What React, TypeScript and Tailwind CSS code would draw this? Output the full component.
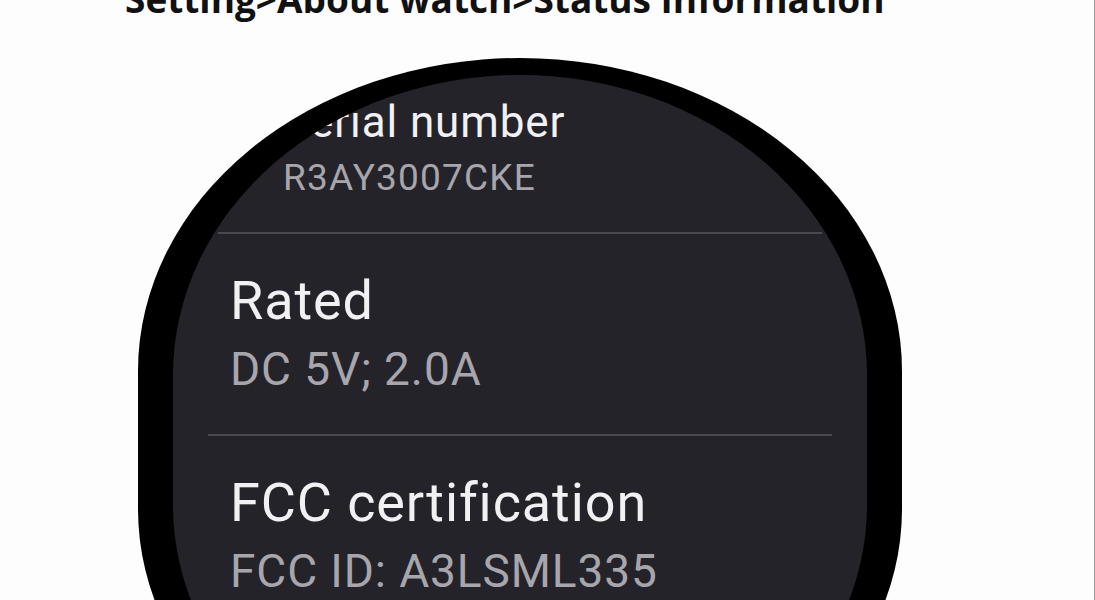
export default function App() {
  return (
    <div className="w-[1095px] h-[600px] overflow-hidden bg-[#fdfdfd] border-r border-[#9c9c9c]">
      <h1
        className="-mt-[20px] ml-[125px] text-[37px] leading-none font-bold text-[#111] whitespace-nowrap"
        style={{ fontFamily: '"Open Sans", "Noto Sans", sans-serif' }}
      >
        Setting&gt;About watch&gt;Status Information
      </h1>

      {/* watch face */}
      <div className="mt-[41px] ml-[138px] w-[764px] h-[764px] rounded-[382px/313px] bg-black pt-[17px] pl-[35px]">
        <div
          className="w-[694px] h-[730px] rounded-[347px/300px] bg-[#25232a] overflow-hidden flex flex-col pt-[25px] tracking-[0.9px]"
          style={{ fontFamily: 'Roboto, "Noto Sans", sans-serif' }}
        >
          <div className="pl-[110px]">
            <div className="text-[44px] leading-none text-[#f1f1f3]">Serial number</div>
            <div className="mt-[15px] text-[37px] leading-none tracking-[1.2px] text-[#a7a6ac]">R3AY3007CKE</div>
          </div>

          <div className="mt-[36px] mx-[45px] h-[2px] bg-[#4a4950]" />

          <div className="pl-[57px] mt-[40px]">
            <div className="text-[54px] leading-none text-[#f1f1f3]">Rated</div>
            <div className="mt-[18px] text-[46px] leading-none text-[#a7a6ac]">DC 5V; 2.0A</div>
          </div>

          <div className="mt-[42px] mx-[35px] h-[2px] bg-[#4a4950]" />

          <div className="pl-[57px] mt-[40px]">
            <div className="text-[54px] leading-none text-[#f1f1f3]">FCC certification</div>
            <div className="mt-[18px] text-[46px] leading-none text-[#a7a6ac]">FCC ID: A3LSML335</div>
          </div>
        </div>
      </div>
    </div>
  );
}
